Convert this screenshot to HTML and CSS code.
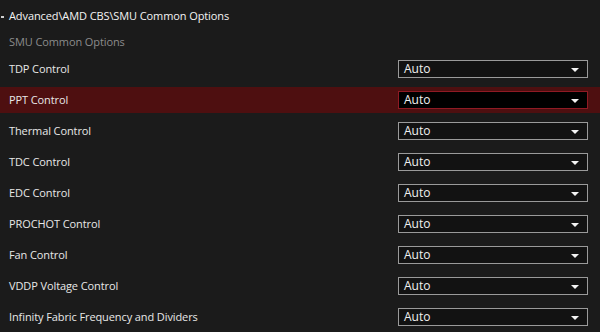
FILE: index.html
```html
<!DOCTYPE html>
<html lang="en">
<head>
  <meta charset="UTF-8">
  <title>SMU Common Options</title>
  <link rel="stylesheet" href="styles.css">
</head>
<body>
  <div class="page">
    <div class="path"><span class="dash"></span>Advanced\AMD CBS\SMU Common Options</div>
    <div class="section">SMU Common Options</div>
    <ul class="options">
      <li class="row"><span class="label">TDP Control</span><div class="select">Auto<span class="arrow"></span></div></li>
      <li class="row active"><span class="label">PPT Control</span><div class="select">Auto<span class="arrow"></span></div></li>
      <li class="row"><span class="label">Thermal Control</span><div class="select">Auto<span class="arrow"></span></div></li>
      <li class="row"><span class="label">TDC Control</span><div class="select">Auto<span class="arrow"></span></div></li>
      <li class="row"><span class="label">EDC Control</span><div class="select">Auto<span class="arrow"></span></div></li>
      <li class="row"><span class="label">PROCHOT Control</span><div class="select">Auto<span class="arrow"></span></div></li>
      <li class="row"><span class="label">Fan Control</span><div class="select">Auto<span class="arrow"></span></div></li>
      <li class="row"><span class="label">VDDP Voltage Control</span><div class="select">Auto<span class="arrow"></span></div></li>
      <li class="row"><span class="label">Infinity Fabric Frequency and Dividers</span><div class="select">Auto<span class="arrow"></span></div></li>
    </ul>
  </div>
</body>
</html>
```
FILE: styles.css
```css
/* Fondo general */
html, body {
  margin: 0;
  padding: 0;
  background-color: #1b1b1b;
}

body {
  font-family: "Open Sans", "DejaVu Sans", sans-serif;
  font-size: 11px;
  letter-spacing: -0.1px;
  color: #e8e8e8;
  width: 600px;
  height: 332px;
  overflow: hidden;
}

.page {
  padding-top: 4px;
}

/* Ruta y título de sección */
.path {
  position: relative;
  height: 24px;
  line-height: 23px;
  padding-left: 9px;
  color: #f4f4f4;
}

.dash {
  position: absolute;
  left: 1px;
  top: 12px;
  width: 3px;
  height: 2px;
  background-color: #cfcfcf;
}

.section {
  height: 28px;
  line-height: 27px;
  padding-left: 9px;
  color: #8c8c8c;
}

/* Lista de opciones */
.options {
  list-style: none;
  margin: 0;
  padding: 0;
  display: flex;
  flex-direction: column;
  gap: 5px;
}

.row {
  height: 26px;
  display: flex;
  align-items: center;
  justify-content: space-between;
  padding: 0 12px 0 9px;
}

.row.active {
  background-color: #4e0f10;
}

.label {
  color: #e8e8e8;
  margin-top: -2px;
}

/* Caja desplegable */
.select {
  position: relative;
  box-sizing: border-box;
  width: 190px;
  height: 18px;
  line-height: 16px;
  padding-left: 5px;
  border: 1px solid #9a9a9a;
  background-color: #121212;
  color: #f0f0f0;
  font-size: 12px;
  letter-spacing: 0;
}

.row.active .select {
  border-color: #8f1a24;
  background-color: #000;
}

.arrow {
  position: absolute;
  right: 8px;
  top: 7px;
  width: 0;
  height: 0;
  border-left: 4px solid transparent;
  border-right: 4px solid transparent;
  border-top: 4px solid #f4f4f4;
}
```
